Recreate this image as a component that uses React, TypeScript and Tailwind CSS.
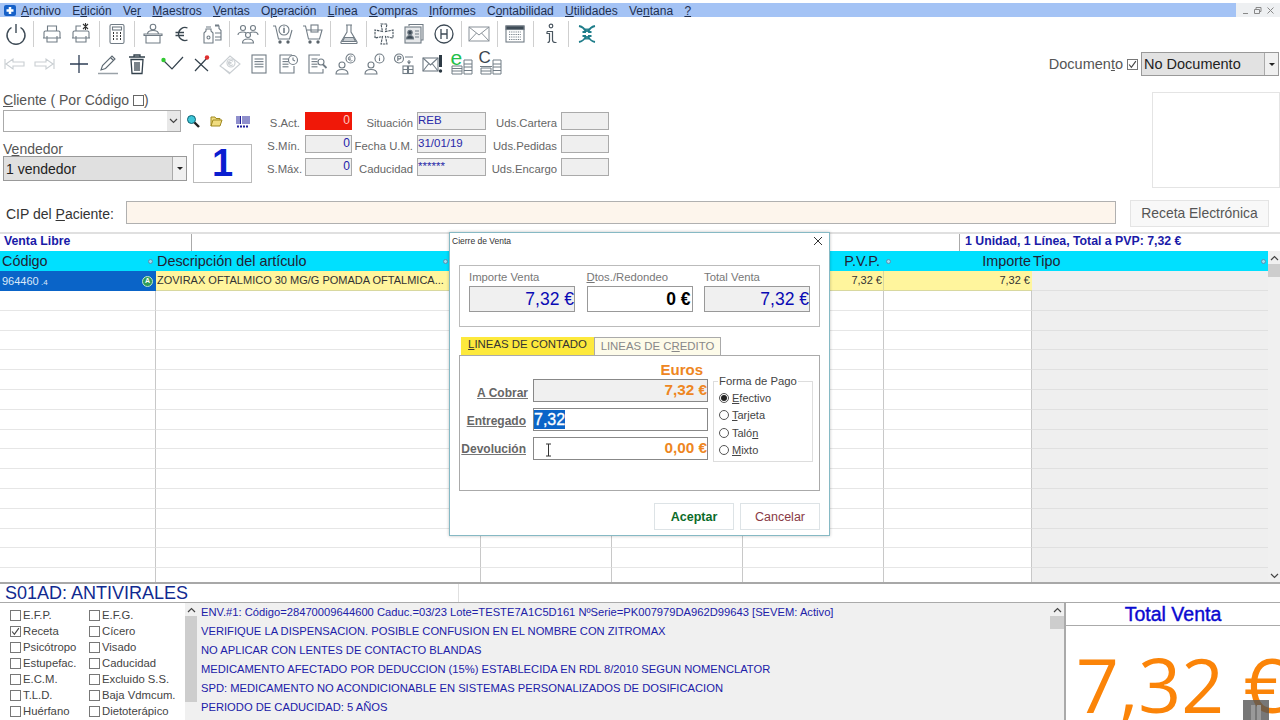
import type { ReactNode } from "react";

const S = "#717c85";

// toolbar icons, drawn on a 24x24 box
function Ico({ children }: { children: ReactNode }) {
  return (
    <svg width="24" height="24" viewBox="0 0 24 24" fill="none" stroke={S} strokeWidth="1.1">
      {children}
    </svg>
  );
}

const Lines = ({ x = 7, y = 7, w = 10, n = 4 }: { x?: number; y?: number; w?: number; n?: number }) => (
  <>
    {Array.from({ length: n }).map((_, i) => (
      <path key={i} d={`M${x} ${y + i * 2.6}h${w}`} />
    ))}
  </>
);

const icons: Record<string, ReactNode> = {
  power: (
    <svg width="24" height="24" viewBox="0 0 24 24" fill="none" stroke="#3d4a55" strokeWidth="1.4">
      <path d="M7.500 5.500a9 9 0 1 0 9 0M12 2v9" />
    </svg>
  ),
  printer: (
    <Ico>
      <path d="M7.500 9V4h9v5M4 16v-5.500q0-1.500 1.500-1.500h13q1.500 0 1.500 1.500V16zM7 14v6h10v-6M3 16h18" />
    </Ico>
  ),
  printerTool: (
    <Ico>
      <path d="M7 9V4h5M4 16v-5.500q0-1.500 1.500-1.500h13q1.500 0 1.500 1.500V16zM7 14v6h10v-6M3 16h18" />
      <path d="M14 2l5 5M19 2l-5 5M16.500 1v7" stroke="#333" />
    </Ico>
  ),
  calc: (
    <Ico>
      <rect x="5" y="2.500" width="14" height="19" rx="1.500" />
      <rect x="7.500" y="5" width="9" height="3" />
      <path d="M8 11h1M11.500 11h1M15 11h1M8 14h1M11.500 14h1M15 14h1M8 17h1M11.500 17h1M15 17h1" stroke="#333" strokeWidth="1.800" />
    </Ico>
  ),
  desk: (
    <Ico>
      <circle cx="12" cy="5" r="2.800" />
      <path d="M6.500 12q0-3.500 5.500-3.500t5.500 3.500M3 12h18v1.500H3zM5 13.500V21h14v-7.500" />
    </Ico>
  ),
  euro: (
    <svg width="24" height="24" viewBox="0 0 24 24" fill="none" stroke="#39464f" strokeWidth="1.300">
      <path d="M17.500 6a6.500 6.500 0 1 0 0 12M5.500 10.500h8.500M5.500 13.500h8.500" />
    </svg>
  ),
  bottles: (
    <Ico>
      <path d="M6 7h5v2l2 2v10H4V11l2-2zM15 4h4v2.500l2 2V18h-6M6 5h5M15 3h4" />
      <circle cx="8.500" cy="15.500" r="1.500" />
      <path d="M15 11h6M15 15h6" />
    </Ico>
  ),
  people: (
    <Ico>
      <circle cx="7" cy="6" r="2.500" />
      <circle cx="17" cy="6" r="2.500" />
      <circle cx="12" cy="13" r="2.500" />
      <path d="M2 13q0-3 5-3 2 0 3 1M22 13q0-3-5-3-2 0-3 1M6.500 21q0-4 5.500-4t5.500 4z" />
    </Ico>
  ),
  cartInfo: (
    <Ico>
      <path d="M2 4h2.500l3 13h11l2.500-9" />
      <circle cx="13" cy="8" r="5" />
      <path d="M13 6v5M13 4.500v.8" strokeWidth="1.600" />
      <circle cx="9" cy="20" r="1.200" fill="#333" />
      <circle cx="17" cy="20" r="1.200" fill="#333" />
    </Ico>
  ),
  cart: (
    <Ico>
      <path d="M2 4h2.500l3 13h11l2.500-9H6" />
      <rect x="10" y="3" width="7" height="7" />
      <circle cx="9" cy="20" r="1.200" fill="#333" />
      <circle cx="17" cy="20" r="1.200" fill="#333" />
    </Ico>
  ),
  flask: (
    <Ico>
      <path d="M9 3h6M10 3v7l-6 10q-.5 1.500 1 1.500h14q1.500 0 1-1.500l-6-10V3M7 15.500h10" />
      <path d="M5.500 19.500l2-4h9l2 4z" fill="#c9ced2" />
    </Ico>
  ),
  cross: (
    <svg width="24" height="24" viewBox="0 0 24 24" fill="none" stroke="#4a5660" strokeWidth="1.100">
      <path d="M9 2h6l-1.500 7.500L21 8v8l-7.500-1.500L15 22H9l1.500-7.500L3 16V8l7.500 1.500z" strokeDasharray="2.500 .8" />
    </svg>
  ),
  card: (
    <Ico>
      <path d="M7 4V2.500h14V18h-2" />
      <rect x="3" y="5" width="16" height="16" fill="#e6e8ea" />
      <circle cx="8" cy="10.500" r="2.200" fill="#3d4a55" />
      <path d="M4.500 17q0-3.500 3.500-3.500t3.500 3.500zM13 9h4M13 12h4M13 15h4" fill="#3d4a55" />
    </Ico>
  ),
  hospital: (
    <svg width="24" height="24" viewBox="0 0 24 24" fill="none" stroke="#3d4a55" strokeWidth="1.300">
      <circle cx="12" cy="12" r="9" />
      <path d="M9 7v10M15 7v10M9 12h6" />
    </svg>
  ),
  mail: (
    <svg width="24" height="24" viewBox="0 0 24 24" fill="none" stroke="#8a9299" strokeWidth="1">
      <rect x="2" y="5" width="20" height="14" />
      <path d="M2 5l10 8 10-8M2 19l7.500-8M22 19l-7.500-8" />
    </svg>
  ),
  calendar: (
    <Ico>
      <rect x="3" y="4" width="18" height="16" />
      <rect x="3" y="4" width="18" height="3.500" fill="#3d4a55" />
      <path d="M6 10h12M6 12.500h12M6 15h12M6 17.500h12" strokeDasharray="1 .8" />
    </Ico>
  ),
  info: (
    <svg width="24" height="24" viewBox="0 0 24 24" fill="none" stroke="#4a5660" strokeWidth="1.200">
      <circle cx="12" cy="4" r="1.800" />
      <path d="M8 9.500h5.500V18q0 2.500 3 2.500h1M8 9.500v2h2.500v7q0 2 -2 2" />
    </svg>
  ),
  arrows: (
    <svg width="24" height="24" viewBox="0 0 24 24" fill="none" stroke="#1f7d8a" strokeWidth="1.800">
      <path d="M4 4q5 1 7 6M11 10V6.500M11 10H7.500M20 4q-5 1-7 6M4 20q5-1 7-6M11 14v3.500M11 14H7.500M20 20q-5-1-7-6M13 14h3.500M13 14v3.500M13 10h3.500M13 10V6.500" />
    </svg>
  ),
  back: (
    <svg width="24" height="24" viewBox="0 0 24 24" fill="none" stroke="#c9ced2" strokeWidth="1.100">
      <path d="M2 7v10M3 12l7-5v3h11v4H10v3z" />
    </svg>
  ),
  next: (
    <svg width="24" height="24" viewBox="0 0 24 24" fill="none" stroke="#c9ced2" strokeWidth="1.100">
      <path d="M22 7v10M21 12l-7-5v3H3v4h11v3z" />
    </svg>
  ),
  plus: (
    <svg width="24" height="24" viewBox="0 0 24 24" fill="none" stroke="#2e3e55" strokeWidth="1.300">
      <path d="M12 3v18M3 12h18" />
    </svg>
  ),
  pencil: (
    <svg width="24" height="24" viewBox="0 0 24 24" fill="none" stroke="#5c6871" strokeWidth="1.100">
      <path d="M5 18l1.500-4.500L16 4l3 3-9.500 9.500zM14.500 5.500l3 3" />
      <path d="M2 21.500h20" strokeWidth="1.500" stroke="#9aa2a8" />
    </svg>
  ),
  trash: (
    <svg width="24" height="24" viewBox="0 0 24 24" fill="none" stroke="#33414c" strokeWidth="1.300">
      <path d="M4 5h16M9 5V3h6v2M6 7.500l1 14h10l1-14zM10 10v9M12 10v9M14 10v9" />
    </svg>
  ),
  ok: (
    <svg width="24" height="24" viewBox="0 0 24 24" fill="none" stroke="#33414c" strokeWidth="1.200">
      <path d="M4 9l8 8L23 5" />
      <circle cx="3.500" cy="8" r="2.200" fill="#32c832" stroke="none" />
    </svg>
  ),
  cancel: (
    <svg width="24" height="24" viewBox="0 0 24 24" fill="none" stroke="#33414c" strokeWidth="1.200">
      <path d="M6 7l13 12M18 6L6 19" />
      <circle cx="18" cy="5.500" r="2.200" fill="#e03030" stroke="none" />
    </svg>
  ),
  till: (
    <svg width="24" height="24" viewBox="0 0 24 24" fill="none" stroke="#c9ced2" strokeWidth="1.100">
      <path d="M2 14l10-10 10 8-10 9zM5 16l7 6" />
      <circle cx="13" cy="11" r="4" />
      <path d="M15 9.500a2.500 2.500 0 1 0 0 3M10.500 10.500h3M10.500 11.800h3" />
    </svg>
  ),
  doc: (
    <Ico>
      <rect x="5" y="3" width="14" height="18" />
      <Lines x={7.500} y={7} w={9} n={4} />
    </Ico>
  ),
  docClock: (
    <Ico>
      <path d="M16 3H4v18h14v-7" />
      <Lines x={6.500} y={7} w={6} n={4} />
      <circle cx="17" cy="8" r="4.500" fill="#fff" />
      <path d="M17 5.500V8l2 1" />
    </Ico>
  ),
  docGlass: (
    <Ico>
      <path d="M15 3H4v18h14v-4" />
      <Lines x={6.500} y={7} w={6} n={4} />
      <circle cx="16" cy="10" r="3" />
      <path d="M18 12.500l3.500 3.500" strokeWidth="1.800" />
    </Ico>
  ),
  userEuro: (
    <Ico>
      <circle cx="8" cy="13" r="3" />
      <path d="M2 22q0-4.500 6-4.500t6 4.500z" />
      <circle cx="16.500" cy="6.500" r="4.500" />
      <path d="M18.500 4.500a2.500 2.500 0 1 0 0 4M14 6h3M14 7.300h3" strokeWidth=".8" />
    </Ico>
  ),
  userInfo: (
    <Ico>
      <circle cx="8" cy="13" r="3" />
      <path d="M2 22q0-4.500 6-4.500t6 4.500z" />
      <circle cx="16.500" cy="6.500" r="4.500" />
      <path d="M16.500 5.500v3.500M16.500 3.800v.7" />
    </Ico>
  ),
  park: (
    <Ico>
      <circle cx="7" cy="6.500" r="4.500" />
      <path d="M5.800 9V4.200h1.800a1.300 1.300 0 0 1 0 2.700H5.800M13 5h8M17 8v3M15.500 9.500l1.500 2 1.500-2" />
      <rect x="11" y="14" width="4.500" height="7.500" />
      <rect x="16.500" y="14" width="4.500" height="7.500" />
      <path d="M11 17.500h4.500M16.500 17.500H21" />
    </Ico>
  ),
  mailAlert: (
    <Ico>
      <rect x="2" y="6" width="15" height="13" />
      <path d="M2 6l7.500 7L17 6M2 19l5.500-7M17 19l-5.500-7" />
      <path d="M19.500 3v12" stroke="#2d3a44" strokeWidth="3" />
      <circle cx="19.500" cy="19" r="1.700" fill="#2d3a44" stroke="none" />
    </Ico>
  ),
  letterE: (
    <div className="relative w-[24px] h-[24px]">
      <svg width="24" height="24" viewBox="0 0 24 24" fill="none" stroke={S} strokeWidth="1">
        <path d="M2 14h10v8H2zM2 16.500h10M2 19h10M14 8h8v14h-8zM14 12h8M14 15h8M14 18.500h8" />
      </svg>
      <span className="absolute left-[1px] top-[-5px] text-[21px] leading-[21px] text-[#22c04a]">e</span>
    </div>
  ),
  letterC: (
    <div className="relative w-[24px] h-[24px]">
      <svg width="24" height="24" viewBox="0 0 24 24" fill="none" stroke={S} strokeWidth="1">
        <path d="M1 14.500h12M2 16h10v6H2zM2 19h10M14 8h8v14h-8zM14 12h8M14 15h8M14 18.500h8" />
      </svg>
      <span className="absolute left-[0px] top-[-3px] text-[17px] leading-[17px] text-[#3a4650]">C</span>
    </div>
  ),
};

const toolbar1 = [
  "power", "|", "printer", "printerTool", "|", "calc", "|", "desk", "euro", "bottles", "|", "people", "|",
  "cartInfo", "cart", "|", "flask", "|", "cross", "card", "hospital", "|", "mail", "|", "calendar", "|", "info", "|", "arrows",
];
const toolbar2 = [
  "back", "next", " ", "plus", "pencil", "trash", " ", "ok", "cancel", "till", "doc", "docClock", "docGlass",
  "userEuro", "userInfo", "park", "mailAlert", "letterE", "letterC",
];

const menu: [string, string, string][] = [
  ["", "A", "rchivo"],
  ["E", "d", "ición"],
  ["Ve", "r", ""],
  ["", "M", "aestros"],
  ["", "V", "entas"],
  ["O", "p", "eración"],
  ["", "L", "ínea"],
  ["", "C", "ompras"],
  ["", "I", "nformes"],
  ["C", "o", "ntabilidad"],
  ["", "U", "tilidades"],
  ["Ve", "n", "tana"],
  ["", "?", ""],
];

const checksA = ["E.F.P.", "Receta", "Psicótropo", "Estupefac.", "E.C.M.", "T.L.D.", "Huérfano"];
const checksB = ["E.F.G.", "Cícero", "Visado", "Caducidad", "Excluido S.S.", "Baja Vdmcum.", "Dietoterápico"];

const notes = [
  "ENV.#1: Código=28470009644600 Caduc.=03/23 Lote=TESTE7A1C5D161 NºSerie=PK007979DA962D99643 [SEVEM: Activo]",
  "VERIFIQUE LA DISPENSACION. POSIBLE CONFUSION EN EL NOMBRE CON ZITROMAX",
  "NO APLICAR CON LENTES DE CONTACTO BLANDAS",
  "MEDICAMENTO AFECTADO POR DEDUCCION (15%) ESTABLECIDA EN RDL 8/2010 SEGUN NOMENCLATOR",
  "SPD: MEDICAMENTO NO ACONDICIONABLE EN SISTEMAS PERSONALIZADOS DE DOSIFICACION",
  "PERIODO DE CADUCIDAD: 5 AÑOS",
];

const stats = [
  { label: "S.Act.", value: "0", field: "Situación", text: "REB", uds: "Uds.Cartera", red: true },
  { label: "S.Mín.", value: "0", field: "Fecha U.M.", text: "31/01/19", uds: "Uds.Pedidas", red: false },
  { label: "S.Máx.", value: "0", field: "Caducidad", text: "******", uds: "Uds.Encargo", red: false },
];

const Chevron = ({ up }: { up?: boolean }) => (
  <svg width="9" height="6" viewBox="0 0 9 6" fill="none" stroke="#444" strokeWidth="1.200">
    <path d={up ? "M1 5l3.500-3.500L8 5" : "M1 1l3.500 3.500L8 1"} />
  </svg>
);

const Caret = () => <div className="w-0 h-0 border-x-[3px] border-x-transparent border-t-[3px] border-t-[#222]" />;

const Dot = () => <div className="w-[5px] h-[5px] rounded-full border border-[#5a8fb0] bg-[#9fdcf0]" />;

function Box({ checked }: { checked?: boolean }) {
  return (
    <span className="w-[11px] h-[11px] border border-[#777] bg-white flex items-center justify-center shrink-0">
      {checked && (
        <svg width="9" height="9" viewBox="0 0 8 8" fill="none" stroke="#444" strokeWidth="1">
          <path d="M1 4l2 2.500L7 1" />
        </svg>
      )}
    </span>
  );
}

function Radio({ on, children }: { on?: boolean; children: ReactNode }) {
  return (
    <div className="h-[17.500px] flex items-center gap-[3px] text-[11px] text-[#444]">
      <span className="w-[10px] h-[10px] rounded-full border border-[#555] bg-white flex items-center justify-center">
        {on && <span className="w-[6px] h-[6px] rounded-full bg-[#222]" />}
      </span>
      <span>{children}</span>
    </div>
  );
}

function Money({ label, value, gray, black }: { label: ReactNode; value: string; gray?: boolean; black?: boolean }) {
  return (
    <div className="w-[106px]">
      <div className="text-[11.300px] leading-[13px] text-[#777] h-[15px]">{label}</div>
      <div
        className={`h-[26px] border border-[#999] flex items-center justify-end text-[17.500px] ${
          gray ? "bg-[#f0f0f0] text-[#0a0ab4]" : "bg-white"
        } ${black ? "font-bold text-black pr-[1px]" : ""}`}
      >
        {value}
      </div>
    </div>
  );
}

function PayRow({ label, children, className, labelPad }: { label: string; children: ReactNode; className: string; labelPad: string }) {
  return (
    <div className="flex items-center h-[23px] mb-[6px]">
      <span className={`w-[73px] text-right text-[12px] font-bold text-[#666] underline decoration-[#777] whitespace-nowrap ${labelPad}`}>{label}</span>
      <div className={`w-[175px] h-[23px] border border-[#888] flex items-center ${className}`}>{children}</div>
    </div>
  );
}

function Dialog() {
  return (
    <div className="absolute left-[449px] top-[232px] w-[381px] h-[304px] bg-white border border-[#86b9c4] shadow-[0_0_3px_rgba(0,0,0,0.25)]">
      <div className="h-[32px] pl-[2px] pr-[6px] pt-[3px] flex items-start justify-between">
        <span className="text-[8.500px] leading-[10px] text-[#333]">Cierre de Venta</span>
        <svg width="10" height="10" viewBox="0 0 10 10" fill="none" stroke="#333" strokeWidth="1">
          <path d="M1 1l8 8M9 1l-8 8" />
        </svg>
      </div>
      <div className="mx-[9px] h-[62px] border border-[#bbb] pt-[5px] pl-[9px] flex gap-[11.500px]">
        <Money label="Importe Venta" value="7,32 €" gray />
        <Money label={<><u>D</u>tos./Redondeo</>} value="0 €" black />
        <Money label="Total Venta" value="7,32 €" gray />
      </div>
      <div className="ml-[11px] mt-[10px] flex h-[18px] text-[11.400px]">
        <div className="w-[133px] bg-[#fde93c] text-[#333] font-medium flex items-center justify-center pb-[2px]">
          <span className="whitespace-nowrap"><u>L</u>INEAS DE CONTADO</span>
        </div>
        <div className="w-[127px] bg-[#fdfbe9] text-[#888] border border-b-0 border-[#aaa] flex items-center justify-center">
          <span className="whitespace-nowrap">LINEAS DE C<u>R</u>EDITO</span>
        </div>
      </div>
      <div className="mx-[9px] h-[136px] border border-[#aaa] relative">
        <div className="text-[15px] font-bold text-[#ee8622] text-right pr-[116px] pt-[6px] h-[23px] leading-[15px]">Euros</div>
        <div className="flex">
          <div>
            <PayRow label="A Cobrar" labelPad="pt-[5px] pr-[5px]" className="bg-[#f0f0f0] justify-end text-[15.300px] font-bold text-[#ee8622]">7,32 €</PayRow>
            <PayRow label="Entregado" labelPad="pt-[2px] pr-[7px]" className="bg-white text-[16px] text-white">
              <span className="bg-[#0a64c8] h-[19px] leading-[19px] [-webkit-text-stroke:0.3px_white]">7,32</span>
            </PayRow>
            <PayRow label="Devolución" labelPad="pr-[7px]" className="bg-white justify-end text-[15.300px] font-bold text-[#ee8622] relative">
              <>
                <svg className="absolute left-[11px] top-[5px]" width="7" height="14" viewBox="0 0 7 14" fill="none" stroke="#333" strokeWidth="1">
                  <path d="M1 1h5M3.500 1v12M1 13h5" />
                </svg>
                0,00 €
              </>
            </PayRow>
          </div>
          <div className="ml-[5px] mt-[2px] w-[100px] h-[81px] border border-[#ddd] relative pt-[7px] pl-[5px]">
            <span className="absolute left-[4px] -top-[7px] bg-white text-[11.300px] leading-[13px] text-[#444] px-[1px] whitespace-nowrap">Forma de Pago</span>
            <Radio on><u>E</u>fectivo</Radio>
            <Radio><u>T</u>arjeta</Radio>
            <Radio>Taló<u>n</u></Radio>
            <Radio><u>M</u>ixto</Radio>
          </div>
        </div>
      </div>
      <div className="flex justify-end gap-[6px] pr-[9px] mt-[12px] text-[12.500px]">
        <div className="w-[80px] h-[27px] border border-[#dde3e6] flex items-center justify-center pt-[1px] font-bold text-[#0b6b2a]">Aceptar</div>
        <div className="w-[80px] h-[27px] border border-[#dde3e6] flex items-center justify-center pt-[1px] text-[#8a3a45]">Cancelar</div>
      </div>
    </div>
  );
}

const gridCols = "grid grid-cols-[156px_325px_131px_131px_141px_148px_237px]";
const emptyRows = Array.from({ length: 15 });

function Grid() {
  return (
    <div className="flex h-[333px] border-b-2 border-[#a8a8a8]">
      <div className="w-[1268px] overflow-hidden">
        <div className="h-[20px] bg-[#00e0ff] flex items-center text-[14.400px] text-[#223] pt-[1px]">
          <div className="w-[155px] pl-[2px] flex items-center justify-between pr-[2px]">
            <span>Código</span>
            <Dot />
          </div>
          <div className="w-[295px] pl-[2px] flex items-center justify-between pr-[2px]">
            <span>Descripción del artículo</span>
            <Dot />
          </div>
          <div className="w-[430px] text-right">P.V.P.</div>
          <div className="ml-[6px]"><Dot /></div>
          <div className="w-[140px] text-right">Importe</div>
          <div className="w-[237px] pl-[2px] flex items-center justify-between pr-[2px]">
            <span>Tipo</span>
            <Dot />
          </div>
        </div>
        <div className={`${gridCols} h-[20px] text-[11px]`}>
          <div className="bg-[#0a64c8] text-[#dbe8f8] pl-[2px] flex items-center justify-between pr-[3px]">
            <span>964460<span className="text-[8px]"> .4</span></span>
            <span className="w-[11px] h-[11px] rounded-full bg-[#2e9a58] border border-[#bfe8c8] text-white text-[7px] font-bold flex items-center justify-center">A</span>
          </div>
          <div className="col-span-4 bg-[#fff59d] flex items-center pl-[1px] text-[#333] border-b border-r border-[#d8d8a0]">
            <div className="w-[294px] whitespace-nowrap overflow-hidden">ZOVIRAX OFTALMICO 30 MG/G POMADA OFTALMICA...</div>
            <div className="ml-auto pr-[1px]">7,32 €</div>
          </div>
          <div className="bg-[#fff59d] border-b border-[#d8d8a0] pr-[2px] flex items-center justify-end text-[#333]">7,32 €</div>
          <div className="bg-[#efefef] border-b border-[#e0e0e0]" />
        </div>
        {emptyRows.map((_, r) => (
          <div key={r} className={`${gridCols} h-[19.800px]`}>
            {[0, 1, 2, 3, 4, 5].map((c) => (
              <div key={c} className="border-r border-b border-r-[#c8c8c8] border-b-[#e6e6e6]" />
            ))}
            <div className="bg-[#efefef] border-b border-[#e0e0e0]" />
          </div>
        ))}
      </div>
      <div className="w-[12px] bg-[#f0f0f0] flex flex-col items-center">
        <div className="h-[13px] flex items-center"><Chevron up /></div>
        <div className="w-full h-[13px] bg-[#cdcdcd]" />
        <div className="flex-1" />
        <div className="h-[13px] flex items-center"><Chevron /></div>
      </div>
    </div>
  );
}

export default function App() {
  return (
    <div className="relative w-[1280px] h-[720px] overflow-hidden bg-white text-[#444] [font-family:'Liberation_Sans',Arial,sans-serif]">
      {/* Menu */}
      <div className="h-[19px] pt-[3px]">
        <div className="h-[14px] bg-[#a4c3f5] flex items-center text-[12px] text-[#1f3050] pl-[3px]">
          <svg className="mr-[4px]" width="14" height="13" viewBox="0 0 14 13">
            <rect x="1" y="1" width="12" height="11" rx="2" fill="#1560c8" />
            <path d="M7 3v7M3.500 6.500h7" stroke="#fff" strokeWidth="2.500" />
          </svg>
          <div className="flex gap-[11.300px] pt-[1px]">
            {menu.map(([a, u, b]) => (
              <span key={a + u + b}>{a}<u>{u}</u>{b}</span>
            ))}
          </div>
          <div className="ml-auto flex h-full bg-[#eef0f2] w-[44px] items-center justify-around px-[3px]">
            <svg width="9" height="9" viewBox="0 0 9 9" fill="none" stroke="#888" strokeWidth="1"><path d="M2 7.500h5" /></svg>
            <svg width="9" height="9" viewBox="0 0 9 9" fill="none" stroke="#888" strokeWidth="1"><path d="M1.500 3.500h5v4h-5zM3 3.500v-2h5v4H6.500" /></svg>
            <svg width="9" height="9" viewBox="0 0 9 9" fill="none" stroke="#888" strokeWidth="1"><path d="M1.500 1.500l6 6M7.500 1.500l-6 6" /></svg>
          </div>
        </div>
      </div>

      {/* Toolbars */}
      <div className="h-[30px] flex items-center pl-[1px]">
        {toolbar1.map((k, i) =>
          k === "|" ? (
            <div key={i} className="w-[6px] h-[26px] flex justify-center"><div className="w-[1px] bg-[#cfcfcf]" /></div>
          ) : (
            <div key={i} className="w-[29.700px] flex justify-center">{icons[k]}</div>
          ),
        )}
      </div>
      <div className="h-[30px] flex items-center">
        {toolbar2.map((k, i) =>
          k === " " ? (
            <div key={i} className="w-[6px]" />
          ) : (
            <div key={i} className="w-[29px] flex justify-center">{icons[k]}</div>
          ),
        )}
        <div className="ml-auto flex items-center text-[14.500px] text-[#555]">
          <span className="pt-[2px]">Documen<u>t</u>o</span>
          <span className="ml-[4px]"><Box checked /></span>
          <div className="ml-[3px] mr-[1px] w-[138px] h-[24px] bg-[#e2e2e2] border border-[#999] flex items-center justify-between text-[#222] pl-[2px]">
            <span className="pt-[1px]">No Documento</span>
            <div className="w-[14px] h-full bg-[#f0f0f0] border-l border-[#aaa] flex items-center justify-center"><Caret /></div>
          </div>
        </div>
      </div>

      {/* Form */}
      <div className="h-[117px] flex">
        <div className="w-[267px] pl-[3px] pt-[13px] shrink-0">
          <div className="text-[14px] leading-[16px] text-[#555] h-[16px]"><u>C</u>liente ( Por Código <span className="inline-block align-[-1px] w-[11px] h-[11px] border border-[#666]" />)</div>
          <div className="flex items-center mt-[2px]">
            <div className="w-[178px] h-[22px] bg-white border border-[#aaa] flex justify-end">
              <div className="w-[13px] bg-[#e8e8e8] flex items-center justify-center"><Chevron /></div>
            </div>
            <svg className="ml-[5px]" width="14" height="14" viewBox="0 0 14 14" fill="#3ec6d8" stroke="#106070" strokeWidth="1">
              <circle cx="5.500" cy="5.500" r="4" />
              <path d="M8.500 8.500l4.500 4.500" stroke="#222" strokeWidth="2.400" fill="none" />
            </svg>
            <svg className="ml-[10px]" width="13" height="12" viewBox="0 0 13 12" fill="#f0dc80" stroke="#a08a20" strokeWidth="1">
              <path d="M1 2h4l1 1.500h4V5h2l-2 6H1z" />
              <path d="M1 11l2-6h7" fill="none" />
            </svg>
            <svg className="ml-[13px]" width="14" height="13" viewBox="0 0 14 13" stroke="#20209a" strokeWidth="1">
              <path d="M1 1v8M3 1v8M4.500 1v8M7 1v8M9 1v8M11 1v8M13 1v8" />
              <path d="M1 11.500h12" strokeDasharray="2 1" strokeWidth="2" />
            </svg>
          </div>
          <div className="flex items-end mt-[8px]">
            <div className="w-[190px]">
              <div className="text-[14px] leading-[14px] pt-[2px] text-[#555]">V<u>e</u>ndedor</div>
              <div className="w-[184px] h-[25px] mb-[2px] bg-[#e0e0e0] border border-[#999] flex items-center justify-between pl-[2px] text-[14px] text-[#222]">
                <span className="pt-[1px]">1 vendedor</span>
                <div className="w-[14px] h-full bg-[#f0f0f0] border-l border-[#aaa] flex items-center justify-center"><Caret /></div>
              </div>
            </div>
            <div className="w-[59px] h-[39px] border border-[#bbb] flex items-center justify-center text-[38px] font-bold text-[#0a1ed0]">1</div>
          </div>
        </div>
        <div className="pt-[33px] text-[11.300px] text-[#666] w-[345px] shrink-0">
          {stats.map((s) => (
            <div key={s.label} className="flex h-[18px] mb-[5px] items-center">
              <span className="w-[33px] pt-[4px] text-right whitespace-nowrap">{s.label}</span>
              <div className={`ml-[5px] w-[47px] h-full border text-right pr-[1px] text-[12px] leading-[15px] ${s.red ? "bg-[#f01808] border-[#f01808] text-[#ffc8c0]" : "bg-[#efefef] border-[#aaa] text-[#2222aa]"}`}>{s.value}</div>
              <span className="w-[61px] pt-[4px] text-right whitespace-nowrap">{s.field}</span>
              <div className="ml-[4px] w-[69px] h-full border border-[#aaa] bg-[#efefef] text-[#2828a8] text-[11.500px] leading-[15px]">{s.text}</div>
              <span className="w-[71px] pt-[4px] text-right whitespace-nowrap">{s.uds}</span>
              <div className="ml-[4px] w-[48px] h-full border border-[#aaa] bg-[#efefef]" />
            </div>
          ))}
        </div>
        <div className="ml-auto mt-[13px] w-[128px] h-[96px] border border-[#e4e4e4]" />
      </div>

      {/* CIP */}
      <div className="h-[36px] flex items-start">
        <span className="w-[126px] pl-[6px] mt-[10px] text-[14px] leading-[16px] text-[#333] whitespace-nowrap">CIP del <u>P</u>aciente:</span>
        <div className="mt-[5px] w-[990px] h-[23px] bg-[#fdf5ec] border border-[#b0b0b0]" />
        <div className="mt-[4px] ml-[14px] w-[139px] h-[27px] bg-[#f8f8f8] border border-[#e4e4e4] flex items-center justify-center text-[13.900px] text-[#555]">Receta Electrónica</div>
      </div>

      {/* Grid */}
      <div className="h-[19px] flex items-center border-t-2 border-[#e0e0e0] text-[12.300px] font-bold text-[#1a1aa8]">
        <div className="w-[192px] h-full border-r border-[#aaa] pl-[4px] flex items-center pb-[2px]">Venta Libre</div>
        <div className="w-[768px] h-full border-r border-[#aaa]" />
        <div className="pl-[5px] pb-[2px]">1 Unidad, 1 Línea, Total a PVP: 7,32 €</div>
      </div>
      <Grid />

      {/* Bottom */}
      <div className="h-[19px] flex border-b border-[#aaa]">
        <div className="w-[459px] border-r border-[#e0e0e0] pl-[5px] text-[18px] leading-[19px] text-[#102a90]">S01AD: ANTIVIRALES</div>
      </div>
      <div className="h-[118px] flex">
        <div className="w-[185px] pl-[10px] pt-[4px] flex shrink-0 text-[11.300px] text-[#444]">
          {[checksA, checksB].map((col, c) => (
            <div key={c} className={c === 0 ? "w-[79px]" : ""}>
              {col.map((t) => (
                <div key={t} className="h-[16px] flex items-center gap-[2px] whitespace-nowrap">
                  <Box checked={t === "Receta"} />
                  <span>{t}</span>
                </div>
              ))}
            </div>
          ))}
        </div>
        <div className="w-[12px] bg-[#f0f0f0] shrink-0 flex flex-col items-center">
          <div className="h-[13px] flex items-center"><Chevron up /></div>
          <div className="w-full h-[86px] bg-[#cdcdcd]" />
        </div>
        <div className="w-[853px] bg-[#f0f0f0] pl-[4px] text-[#2020a8] text-[11.200px] shrink-0">
          {notes.map((n) => (
            <div key={n} className="h-[19px] leading-[19px] whitespace-nowrap">{n}</div>
          ))}
        </div>
        <div className="w-[14px] bg-[#f0f0f0] shrink-0 flex flex-col items-center">
          <div className="h-[13px] flex items-center"><Chevron up /></div>
          <div className="w-full h-[13px] bg-[#cdcdcd]" />
        </div>
        <div className="flex-1 border-l-2 border-[#aaa] overflow-hidden">
          <div className="h-[23px] border-b border-[#aaa] text-center text-[19.500px] leading-[22px] text-[#0a0ad0] [-webkit-text-stroke:0.4px_#0a0ad0]">Total Venta</div>
          <div className="pl-[10px] pt-[13px] whitespace-nowrap text-[75px] leading-[90px] text-[#fb8408] [font-family:'Open_Sans',sans-serif]">7,32 €</div>
        </div>
      </div>

      <Dialog />

      {/* video pause mark */}
      <div className="absolute left-[1243px] top-[700px] w-[26px] h-[20px] bg-[#555]/80 flex justify-center gap-[2px] pt-[5px]">
        <div className="w-[4px] h-[15px] bg-[#999]" />
        <div className="w-[4px] h-[15px] bg-[#999]" />
      </div>
    </div>
  );
}
